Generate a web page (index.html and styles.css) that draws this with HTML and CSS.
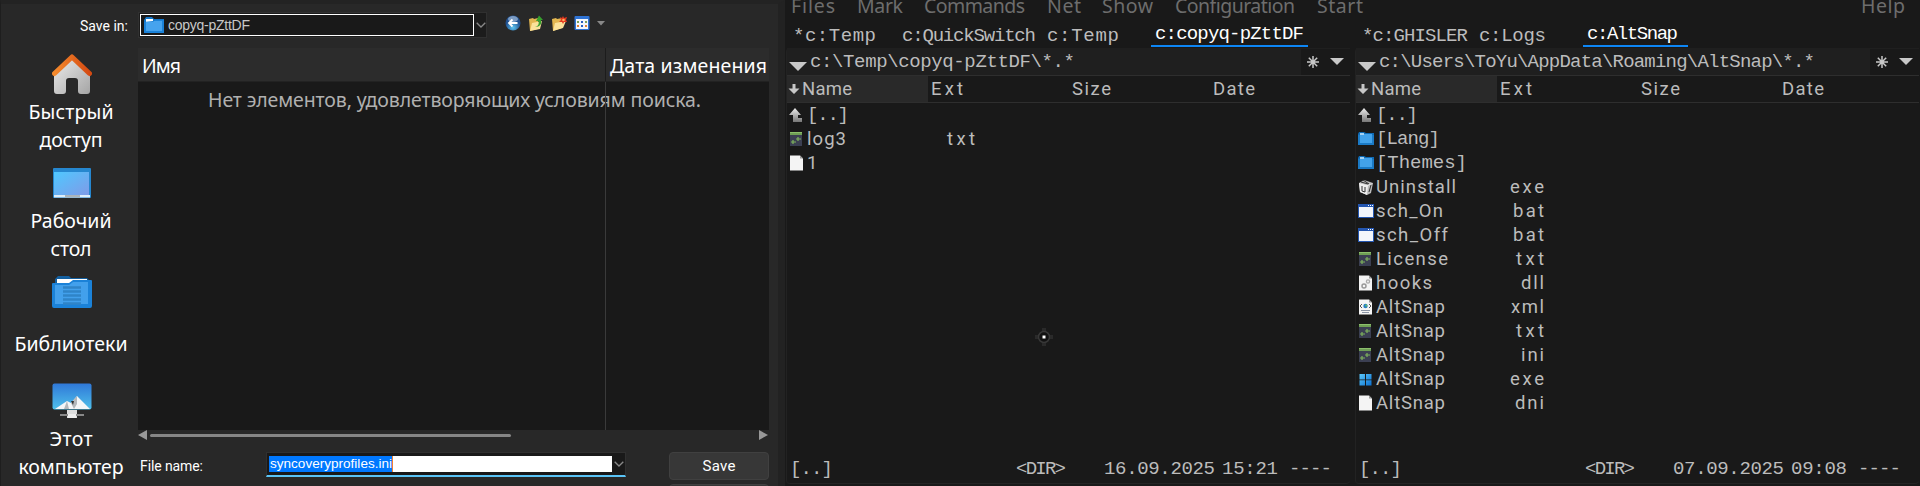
FILE: index.html
```html
<!DOCTYPE html>
<html lang="ru">
<head>
<meta charset="utf-8">
<title>Save as</title>
<link rel="stylesheet" href="styles.css">
</head>
<body>
<svg width="0" height="0" class="defs">
  <defs>
    <linearGradient id="gUp" x2="0" y2="1"><stop stop-color="#eee"/><stop offset="1" stop-color="#777"/></linearGradient>
    <linearGradient id="gRoof" x2="1"><stop stop-color="#f58a2c"/><stop offset="1" stop-color="#d44a12"/></linearGradient>
    <linearGradient id="gWall" x2="1" y2="1"><stop stop-color="#eee"/><stop offset="1" stop-color="#a5a5a5"/></linearGradient>
    <linearGradient id="gDesk" x2="1" y2="1"><stop stop-color="#4fc8ff"/><stop offset="1" stop-color="#7f9be8"/></linearGradient>
    <linearGradient id="gSky" x2="0" y2="1"><stop stop-color="#2f78d8"/><stop offset="1" stop-color="#4fc0ea"/></linearGradient>
    <linearGradient id="gWin" x2="1" y2="1"><stop stop-color="#5cc8fa"/><stop offset="1" stop-color="#0a6fd0"/></linearGradient>
    <radialGradient id="gBall" cy=".8"><stop stop-color="#5cc4f0"/><stop offset="1" stop-color="#20508f"/></radialGradient>
  </defs>
  <symbol id="up" viewBox="0 0 16 16"><path d="M6 1 12 8H9v3h4v4H4V8H0z" fill="url(#gUp)"/></symbol>
  <symbol id="txt" viewBox="0 0 16 16"><path d="M1 1h12v14H1z" fill="#3b3f52"/><path d="M1 1h12v3H1z" fill="#6f9f55"/><path d="M1 1h12v1H1z" fill="#8cbf6c"/><path d="M9 6v4M7 8h5M4 9v4M2 11h5" stroke="#7fb45c" stroke-width="1.2"/></symbol>
  <symbol id="doc" viewBox="0 0 16 16"><path d="M1 .5h10l3 3V15.500H1z" fill="#f4f4f4"/><path d="m11 .5 3 3h-3z" fill="#999"/></symbol>
  <symbol id="dir" viewBox="0 0 16 16"><path d="M0 3 1 1h5l2 1h8v12H0z" fill="#0f6bb5"/><path d="M0 4h16v10H0z" fill="#1a7ac6"/><path d="M2 3h12v9H2z" fill="#42a2ea"/><path d="M2 2h4v2H2z" fill="#a5d2f3"/></symbol>
  <symbol id="box" viewBox="0 0 16 16"><path d="M1 4 6 1l9 3-2 10-4 2-7-3z" fill="#bbb"/><path d="m1 4 8 2 6-2-5 3-1 9-7-3z" fill="#eee"/><path d="m3 3 7 2M5 1l6 4M4 7v5l3 1V8M13 6l-2 7" stroke="#333" fill="none"/></symbol>
  <symbol id="bat" viewBox="0 0 16 16"><path d="M0 1h16v14H0z" fill="#2456b0"/><path d="M1 4h14v10H1z" fill="#f3f6fb"/><path d="M10 2h1v1h-1zM12 2h1v1h-1zM14 2h1v1h-1z" fill="#fff"/></symbol>
  <symbol id="dll" viewBox="0 0 16 16"><path d="M1 .5h10l3 3V15.500H1z" fill="#f4f4f4"/><path d="m11 .5 3 3h-3z" fill="#999"/><circle cx="6" cy="11" r="2" fill="none" stroke="#999" stroke-width="1.500"/><circle cx="10" cy="6.500" r="1.600" fill="none" stroke="#aaa" stroke-width="1.300"/></symbol>
  <symbol id="xml" viewBox="0 0 16 16"><path d="M1 .5h10l3 3V15.500H1z" fill="#f4f4f4"/><path d="m11 .5 3 3h-3z" fill="#999"/><path d="m4 5-2 2 2 2M11 5l2 2-2 2" stroke="#555" fill="none"/><circle cx="7.500" cy="7" r="2.200" fill="#267fc4"/><circle cx="8.200" cy="6.500" r="1" fill="#6ac05a"/><path d="M3 11.500h9M4 13.500h7" stroke="#8c95a5"/></symbol>
  <symbol id="win" viewBox="0 0 16 16"><path d="M1.500 3h5.500v5.500H1.500zM8 3h5.500v5.500H8zM1.500 9.300h5.500v5.200H1.500zM8 9.300h5.500v5.200H8z" fill="url(#gWin)"/></symbol>
  <symbol id="sort" viewBox="0 0 12 12"><path d="M4.500 1h3v4.500H11.500L6 11 .5 5.500h4z" fill="#c8c8c8"/></symbol>
  <symbol id="star" viewBox="0 0 14 14"><path d="M7 1v12M1 7h12M2.800 2.800l8.400 8.400M11.200 2.800l-8.400 8.400" stroke="#c8c8c8" stroke-width="1.500"/></symbol>
  <symbol id="chev" viewBox="0 0 10 6"><path d="m.7.7 4.300 4.300L9.300.7" stroke="#888" stroke-width="1.300" fill="none"/></symbol>
</svg>

<div class="screen">
  <section class="dialog">
    <div class="top">
      <span class="ui label" data-w="48">Save in:</span>
      <div class="combo">
        <div class="combo-value"><svg class="i-dir" viewBox="0 0 20 16"><path d="M0 3 2 0h6l2 2h10v14H0z" fill="#1476c8"/><path d="M2 2h7v3H2z" fill="#fff"/><path d="M0 5 9 4l2-1h9v13H0z" fill="#1b82d8"/><path d="M2 5h7l1-1h8v10H2z" fill="#46a3ee"/></svg><span class="arial" data-w="82">copyq-pZttDF</span></div>
        <div class="combo-btn"><svg width="10" height="6"><use href="#chev"/></svg></div>
      </div>
      <div class="tools">
        <svg width="16" height="16" viewBox="0 0 16 16"><circle cx="8" cy="8" r="7.500" fill="url(#gBall)"/><ellipse cx="8" cy="4" rx="5" ry="3" fill="#b9cde4" opacity=".6"/><path d="M7.500 4.500 4 8l3.500 3.500M4.500 8h8" stroke="#fff" stroke-width="1.800" fill="none"/></svg>
        <svg width="16" height="16" viewBox="0 0 16 16"><path d="M1 4 5 3l1 1 4-1v11L2 16z" fill="#e2b650"/><path d="m2 16 2-8 10-2-2 8z" fill="#fbe29a"/><path d="M7 12c4-1 4-4 3.500-6H8l3-5.500L15 5h-2c1 4-1 7-6 7z" fill="#37a02e"/></svg>
        <svg width="16" height="16" viewBox="0 0 16 16"><path d="M1 4 5 3l1 1 5-1v10L2 16z" fill="#e2b650"/><path d="m2 16 2-8 11-2-3 7z" fill="#fbe29a"/><path d="m12 1 1 2 3-1-1 3 1 2-3 0-1 2-1-2-3 0 2-2-1-3 2 1z" fill="#e5371c"/><circle cx="12.500" cy="5" r="1.300" fill="#ffb060"/></svg>
        <svg width="16" height="16" viewBox="0 0 16 16"><rect x=".5" y="1" width="15" height="14" rx="1" fill="#2f73d4"/><path d="M2 4h12v10H2z" fill="#f5f7fb"/><path d="M3 6h2v2H3zM11 6h2v2h-2z" fill="#7aa05a"/><path d="M7 6h2v2H7zM7 10h2v2H7z" fill="#2860c0"/><path d="M3 10h2v2H3zM11 10h2v2h-2z" fill="#e08030"/></svg>
        <svg width="8" height="5" viewBox="0 0 8 5"><path d="M0 0h8L4 4.500z" fill="#888"/></svg>
      </div>
    </div>

    <div class="middle">
      <nav class="places">
        <svg class="p-home" width="40" height="40" viewBox="0 0 40 40"><path d="M2 18 20 2l18 16v19q0 3-3 3h-6q-3 0-3-3V27q0-3-3-3h-6q-3 0-3 3v10q0 3-3 3H5q-3 0-3-3z" fill="url(#gWall)"/><path d="M2.500 19.500 20 3l17.500 16.500" stroke="url(#gRoof)" stroke-width="5" stroke-linecap="round" stroke-linejoin="round" fill="none"/></svg>
        <span class="nun p-t1"><b data-w="85">Быстрый</b><b data-w="63">доступ</b></span>
        <svg class="p-desk" width="38" height="30" viewBox="0 0 38 30"><rect width="38" height="30" rx="1" fill="#2687cf"/><path d="M1 4h35v23H1z" fill="url(#gDesk)"/><path d="M1 27h36v2.500H1z" fill="#ddeefa"/><path d="M12 27h15v2.500H12z" fill="#aab4bc"/></svg>
        <span class="nun p-t2"><b data-w="81">Рабочий</b><b data-w="41">стол</b></span>
        <svg class="p-lib" width="40" height="32" viewBox="0 0 40 32"><path d="M3 3 6 0h11l2 2h16l3 3v4H3z" fill="#135f9f"/><path d="M5 3h30v5H5z" fill="#fff"/><path d="M0 8q0-1 1-1h16l4-3h18q1 0 1 1v25q0 2-2 2H2q-2 0-2-2z" fill="#1b82d8"/><path d="M3 9h14l4-3h15v22H3z" fill="#42a0ec"/><path d="M11 11.500h18M11 15.500h18M11 19.500h18M11 23.500h18M11 27.500h18" stroke="#2f84c8" stroke-width="2.500"/></svg>
        <span class="nun p-t3"><b data-w="113">Библиотеки</b></span>
        <svg class="p-pc" width="40" height="36" viewBox="0 0 40 36"><rect x=".5" y=".5" width="39" height="26" rx="2" fill="url(#gSky)"/><path d="m3 26 12-8 4 2 6-7 13 13z" fill="#f4f6f8"/><path d="m15 18 2 8h-5zM25 13l-6 7 3 6 3-5z" fill="#b4b8bc"/><path d="m19 18 3 0-1 4z" fill="#333"/><path d="M15 27h10v8H15z" fill="#ddd"/><path d="M8 32h24" stroke="#888" stroke-width="2"/><path d="M16 31h8v4h-8z" fill="#eee"/></svg>
        <span class="nun p-t4"><b data-w="43">Этот</b><b data-w="105">компьютер</b></span>
      </nav>

      <div class="main">
        <div class="list-head nun"><span data-w="39">Имя</span><span class="h-date" data-w="157">Дата изменения</span></div>
        <div class="list-body nun"><span data-w="493">Нет элементов, удовлетворяющих условиям поиска.</span></div>
        <div class="scroll"><svg width="9" height="10" viewBox="0 0 9 10"><path d="M9 0v10L0 5z" fill="#999"/></svg><i class="thumb"></i><svg width="9" height="10" viewBox="0 0 9 10"><path d="M0 0v10l9-5z" fill="#999"/></svg></div>
        <div class="bottom">
          <span class="ui fn" data-w="63">File name:</span>
          <div class="file">
            <div class="file-edit"><span class="sel arial2" data-w="122">syncoveryprofiles.ini</span></div>
            <svg width="10" height="6"><use href="#chev"/></svg>
          </div>
          <div class="buttons"><div class="btn ui"><span data-w="33">Save</span></div><div class="btn"></div></div>
        </div>
      </div>
    </div>
  </section>

  <section class="commander">
    <div class="menu nun"><span data-w="44">Files</span><span data-w="46">Mark</span><span data-w="101">Commands</span><span data-w="34">Net</span><span data-w="51">Show</span><span data-w="120">Configuration</span><span data-w="46">Start</span><span data-w="44">Help</span></div>
    <div class="panels">
      <div class="side">
        <div class="tabs t-left"><span data-w="83">*c:Temp</span><span data-w="134">c:QuickSwitch</span><span data-w="72">c:Temp</span><span class="active"><b data-w="149">c:copyq-pZttDF</b></span></div>
        <div class="panel">
          <div class="path"><svg width="18" height="9" viewBox="0 0 18 9"><path d="M0 0h18L9 9z" fill="#c8c8c8"/></svg><span data-w="265">c:\Temp\copyq-pZttDF\*.*</span><div class="path-btns"><svg width="14" height="14"><use href="#star"/></svg><svg width="14" height="7" viewBox="0 0 14 7"><path d="M0 0h14L7 7z" fill="#c8c8c8"/></svg></div></div>
          <div class="cols"><div class="c-name"><svg width="12" height="12"><use href="#sort"/></svg><span data-w="50">Name</span></div><span data-w="32">Ext</span><span data-w="39">Size</span><span data-w="42">Date</span></div>
          <div class="rows">
            <div class="row up"><svg><use href="#up"/></svg><span data-w="42">[..]</span></div>
            <div class="row"><svg><use href="#txt"/></svg><span data-w="39">log3</span><em data-w="28">txt</em></div>
            <div class="row"><svg><use href="#doc"/></svg><span>1</span></div>
          </div>
          <div class="status"><span data-w="43">[..]</span><span data-w="50">&lt;DIR&gt;</span><span data-w="111">16.09.2025</span><span data-w="56">15:21</span><span data-w="43">----</span></div>
        </div>
      </div>
      <div class="side">
        <div class="tabs t-right"><span data-w="106">*c:GHISLER</span><span data-w="67">c:Logs</span><span class="active"><b data-w="91">c:AltSnap</b></span></div>
        <div class="panel">
          <div class="path"><svg width="18" height="9" viewBox="0 0 18 9"><path d="M0 0h18L9 9z" fill="#c8c8c8"/></svg><span data-w="436">c:\Users\ToYu\AppData\Roaming\AltSnap\*.*</span><div class="path-btns"><svg width="14" height="14"><use href="#star"/></svg><svg width="14" height="7" viewBox="0 0 14 7"><path d="M0 0h14L7 7z" fill="#c8c8c8"/></svg></div></div>
          <div class="cols"><div class="c-name"><svg width="12" height="12"><use href="#sort"/></svg><span data-w="50">Name</span></div><span data-w="32">Ext</span><span data-w="39">Size</span><span data-w="42">Date</span></div>
          <div class="rows">
            <div class="row up"><svg><use href="#up"/></svg><span data-w="42">[..]</span></div>
            <div class="row up"><svg><use href="#dir"/></svg><span data-w="64">[Lang]</span></div>
            <div class="row up"><svg><use href="#dir"/></svg><span data-w="91">[Themes]</span></div>
            <div class="row"><svg><use href="#box"/></svg><span data-w="80">Uninstall</span><em data-w="34">exe</em></div>
            <div class="row"><svg><use href="#bat"/></svg><span data-w="67">sch_On</span><em data-w="31">bat</em></div>
            <div class="row"><svg><use href="#bat"/></svg><span data-w="72">sch_Off</span><em data-w="31">bat</em></div>
            <div class="row"><svg><use href="#txt"/></svg><span data-w="72">License</span><em data-w="28">txt</em></div>
            <div class="row"><svg><use href="#dll"/></svg><span data-w="56">hooks</span><em data-w="23">dll</em></div>
            <div class="row"><svg><use href="#xml"/></svg><span data-w="69">AltSnap</span><em data-w="33">xml</em></div>
            <div class="row"><svg><use href="#txt"/></svg><span data-w="69">AltSnap</span><em data-w="28">txt</em></div>
            <div class="row"><svg><use href="#txt"/></svg><span data-w="69">AltSnap</span><em data-w="23">ini</em></div>
            <div class="row"><svg><use href="#win"/></svg><span data-w="69">AltSnap</span><em data-w="34">exe</em></div>
            <div class="row"><svg><use href="#doc"/></svg><span data-w="69">AltSnap</span><em data-w="29">dni</em></div>
          </div>
          <div class="status"><span data-w="43">[..]</span><span data-w="50">&lt;DIR&gt;</span><span data-w="111">07.09.2025</span><span data-w="56">09:08</span><span data-w="43">----</span></div>
        </div>
      </div>
    </div>
  </section>
  <svg class="pointer" width="18" height="18" viewBox="0 0 18 18"><circle cx="9" cy="9" r="5.500" fill="#111" stroke="#383838" stroke-width="1.500"/><path d="M9 0v3M9 15v3M0 9h3M15 9h3" stroke="#2a2a2a" stroke-width="4"/><path d="M7.500 7.500h3v3h-3z" fill="#fff"/></svg>
</div>
<script src="fit.js"></script>
</body>
</html>
```
FILE: fit.js
```js
// Tracks each label so that it fills the width given in data-w.
document.querySelectorAll('[data-w]').forEach(function (el) {
  var range = document.createRange();
  range.selectNodeContents(el);
  var natural = range.getBoundingClientRect().width;
  var gaps = el.textContent.length - 1;
  var spacing = (parseFloat(el.dataset.w) - natural) / gaps;
  el.style.letterSpacing = spacing.toFixed(3) + 'px';
  el.style.marginRight = (-spacing).toFixed(3) + 'px';
});
```
FILE: styles.css
```css
* { box-sizing: border-box; }
body { margin: 0; background: #191919; overflow: hidden; }
svg { display: block; flex: none; }
span, b, em { white-space: pre; font-weight: normal; font-style: normal; }
.defs { position: absolute; }
.screen { position: relative; display: flex; width: 1920px; height: 486px; overflow: hidden; }
.nun { font: 19.5px/28px "Noto Sans", sans-serif; }
.ui { font: 14px/18px Roboto, sans-serif; color: #fff; }
.arial { font: 14px/18px "Liberation Sans", sans-serif; color: #c8c8c8; }
.arial2 { font: 13.5px/16px "Liberation Sans", sans-serif; color: #fff; }

/* save dialog */
.dialog { width: 785px; height: 486px; background: #282828; border-left: 1px solid #1e1e1e; border-right: 7px solid #222; border-top: 4px solid #232323; overflow: hidden; }
.top { height: 44px; display: flex; align-items: flex-start; padding-top: 8px; }
.label { width: 137px; padding: 5px 0 0 79px; flex: none; }
.combo { display: flex; width: 349px; height: 26px; border: 1px solid #303030; background: #1c1c1c; }
.combo-value { margin: 1px; width: 334px; height: 22px; border: 1px solid #fff; background: #191919; display: flex; align-items: center; gap: 4px; padding-left: 3px; }
.i-dir { width: 20px; height: 16px; }
.combo-btn { flex: 1; display: grid; place-items: center; }
.tools { display: flex; align-items: center; gap: 7px; margin: 3px 0 0 18px; }
.middle { display: flex; height: 438px; }
.places { width: 137px; flex: none; display: flex; flex-direction: column; align-items: center; color: #fff; padding: 6px 0 0 5px; }
.places .nun { display: flex; flex-direction: column; align-items: center; padding-right: 2px; }
.p-t1 { margin-top: 4px; }
.p-desk { margin-top: 14px; }
.p-t2 { margin-top: 9px; }
.p-lib { margin-top: 13px; }
.p-t3 { margin-top: 22px; }
.p-pc { margin-top: 25px; }
.p-t4 { margin-top: 6px; }
.main { width: 631px; }
.list-head { display: grid; grid-template-columns: 467px 1fr; height: 34px; background: #2c2c2c; border-bottom: 1px solid #222; color: #fff; padding: 4px 0 0 4px; }
.h-date { position: relative; padding-left: 1px; }
.h-date::before { content: ""; position: absolute; left: -4px; top: -4px; width: 1px; height: 33px; background: #1c1c1c; }
.list-body { position: relative; height: 348px; background: #191919; color: #b0b0b0; padding: 4px 0 0 70px; }
.list-body::before { content: ""; position: absolute; left: 467px; top: 0; width: 1px; height: 100%; background: #3a3a3a; }
.scroll { display: flex; align-items: center; height: 10px; }
.thumb { width: 361px; height: 3px; border-radius: 2px; background: #868686; margin: 1px 243px 0 3px; flex: none; }
.scroll svg:last-child { margin-left: 5px; }
.bottom { display: grid; grid-template-columns: 128px 360px 1fr; padding-top: 12px; align-items: start; }
.fn { padding: 5px 0 0 2px; }
.file { height: 25px; border: 1px solid #303030; border-bottom: 2px solid #5ac4f7; background: #191919; display: flex; align-items: center; gap: 2px; }
.file-edit { width: 343px; height: 16px; margin-left: 2px; background: #fff; display: flex; }
.sel { background: #0078ff; box-shadow: 1px 0 0 #f08030; padding-left: 1px; }
.buttons { padding-left: 43px; display: grid; gap: 4px; }
.btn { width: 100px; height: 28px; border: 1px solid #404040; border-radius: 4px; background: #373737; display: grid; place-items: center; font-size: 15px; }

/* file manager */
.commander { flex: 1; background: #191919; font: 19px/24px "Liberation Mono", monospace; color: #bcbcbc; }
.menu { display: grid; grid-template-columns: 66px 67px 123px 55px 73px 142px 544px auto; height: 24px; padding-left: 6px; line-height: 28px; color: #6d6d6d; }
.menu span { margin-top: -8px; }
.panels { display: flex; gap: 5px; padding-left: 1px; }
.side { width: 564px; flex: none; }
.tabs { display: grid; height: 24px; align-items: start; padding-left: 7px; }
.t-left { grid-template-columns: 109px 145px 104px 157px; }
.t-right { grid-template-columns: 117px 104px 105px; }
.active { color: #fff; height: 23px; border-bottom: 2px solid #0d86f5; padding-left: 4px; line-height: 20px; }
.tabs > span:not(.active) { line-height: 25px; }
.panel { height: 436px; border-bottom: 1px solid #242424; border-left: 1px solid #222; border-radius: 4px; display: flex; flex-direction: column; }
.path { height: 28px; flex: none; background: #1f1f1f; border-bottom: 1px solid #2e2e2e; display: flex; align-items: center; padding-left: 2px; gap: 2px; }
.path > svg { margin-top: 10px; }
.path > span { padding-left: 1px; }
.path-btns { width: 49px; height: 26px; margin-left: auto; background: #191919; display: flex; align-items: center; gap: 10px; padding-left: 5px; flex: none; }
.cols { height: 27px; flex: none; display: grid; grid-template-columns: 141px 3px 141px 141px 1fr; border-bottom: 1px solid #2e2e2e; align-items: center; font: 18.5px/24px Roboto, sans-serif; }
.cols > span:nth-child(2) { grid-column: 3; }
.c-name { height: 26px; background: #292929; display: flex; align-items: center; gap: 2px; padding-left: 1px; }
.rows { flex: 1; }
.row { height: 24px; display: grid; grid-template-columns: 18px 90px 78px; align-items: center; padding-left: 2px; font: 18.5px/24px Roboto, sans-serif; }
.row.up { font: 19px/24px "Liberation Mono", monospace; }
.row svg { width: 16px; height: 16px; }
.row em { justify-self: end; }
.status { height: 28px; flex: none; display: grid; grid-template-columns: 226px 88px 118px 67px auto; padding: 2px 0 0 3px; }
.pointer { position: absolute; left: 1035px; top: 328px; }
```
